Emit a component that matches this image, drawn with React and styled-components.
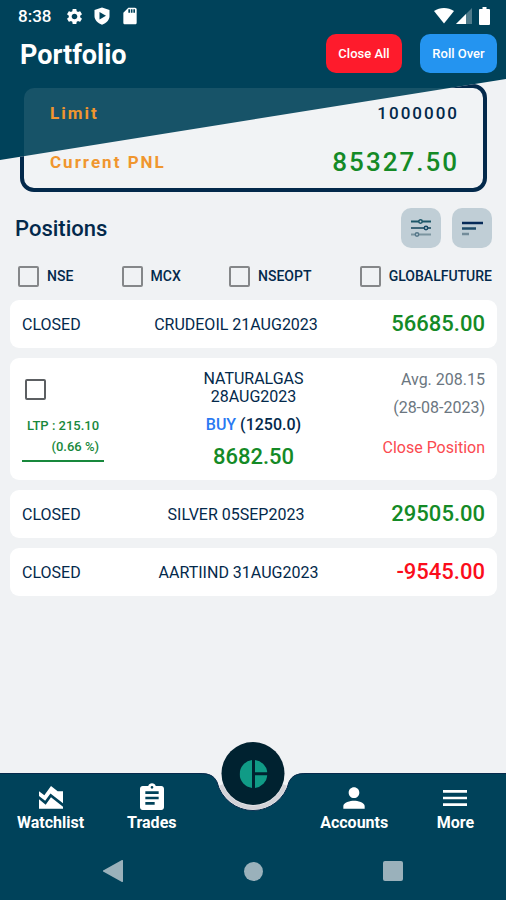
import React from 'react';
import styled, { createGlobalStyle } from 'styled-components';
import {
  MdAreaChart,
  MdSettings,
  MdSdCard,
  MdAssignment,
  MdPerson,
  MdMenu,
} from 'react-icons/md';

const color = {
  teal: '#00425a',
  navy: '#03294b',
  page: '#f0f2f4',
  green: '#148a26',
  ltp: '#18883c',
  red: '#fb0d1b',
  orange: '#f0962e',
};

const GlobalStyle = createGlobalStyle`
  * { box-sizing: border-box; }
  body {
    margin: 0;
    background: ${color.page};
    color: ${color.navy};
    font-family: Roboto, "Liberation Sans", sans-serif;
  }
  button, input { font: inherit; }
  button { border: 0; padding: 0; background: none; cursor: pointer; }
  svg { display: block; }
`;

const Page = styled.div`
  min-height: 100vh;
  display: flex;
  flex-direction: column;
`;

const Hero = styled.header`
  position: relative;
  isolation: isolate;
`;

const Slant = styled.div`
  position: absolute;
  z-index: -1;
  top: 0;
  left: 0;
  right: 0;
  height: 160px;
  background: ${color.teal};
  clip-path: polygon(0 0, 100% 0, 100% 79px, 0 160px);
`;

const StatusBar = styled.div`
  height: 32px;
  padding: 0 16px 0 18px;
  display: flex;
  align-items: center;
  justify-content: space-between;
  color: #fff;
`;

const StatusGroup = styled.div`
  display: flex;
  align-items: center;
  gap: ${(p) => p.$gap}px;
`;

const Clock = styled.time`
  margin-right: 4px;
  font-size: 17px;
  font-weight: 500;
`;

const TitleBar = styled.div`
  padding: 2px 9px 0 20px;
  height: 52px;
  display: flex;
  align-items: flex-start;
  gap: 18px;
`;

const Title = styled.h1`
  margin: 0 auto 0 0;
  color: #fff;
  font-size: 27px;
  line-height: 42px;
  font-weight: 700;
`;

const ActionButton = styled.button`
  height: 39px;
  width: ${(p) => p.$width}px;
  border-radius: 10px;
  background: ${(p) => p.$tone};
  color: #fff;
  font-size: 13px;
  font-weight: 500;
`;

const SummaryArea = styled.section`
  position: relative;
  padding: 0 19px 0 20px;
`;

const FrameLayer = styled.div`
  position: absolute;
  inset: 0;
  padding: inherit;
  pointer-events: none;
  clip-path: polygon(0 76px, 100% -5px, 100% 100%, 0 100%);
`;

const Frame = styled.div`
  height: 100%;
  border: 4px solid ${color.navy};
  border-radius: 14px;
`;

const Summary = styled.dl`
  margin: 0;
  height: 108px;
  padding: 0 24px 0 26px;
  border: 4px solid transparent;
  border-radius: 14px;
  background: rgba(255, 255, 255, 0.09) padding-box;
  letter-spacing: 2px;
`;

const SummaryRow = styled.div`
  height: 49px;
  display: flex;
  align-items: center;
  justify-content: space-between;
`;

const SummaryLabel = styled.dt`
  color: ${color.orange};
  font-size: 17px;
  font-weight: 700;
`;

const SummaryValue = styled.dd`
  margin: 0;
  color: ${(p) => (p.$strong ? color.green : color.navy)};
  font-size: ${(p) => (p.$strong ? 26 : 17)}px;
  font-weight: 500;
`;

const Main = styled.main`
  flex: 1;
  padding: 16px 9px 60px 10px;
`;

const SectionHead = styled.div`
  padding: 0 5px;
  display: flex;
  align-items: center;
  gap: 11px;
`;

const SectionTitle = styled.h2`
  margin: 0 auto 0 0;
  padding-top: 2px;
  font-size: 22px;
  line-height: 38px;
  font-weight: 500;
`;

const IconButton = styled.button`
  width: 40px;
  height: 40px;
  display: grid;
  place-items: center;
  border-radius: 10px;
  background: #c0ced6;
`;

const Filters = styled.div`
  height: 52px;
  padding: 4px 5px 0 8px;
  display: flex;
  align-items: center;
  justify-content: space-between;
`;

const FilterLabel = styled.label`
  display: flex;
  align-items: center;
  gap: 8px;
  font-size: 14px;
  font-weight: 500;
`;

const Checkbox = styled.input.attrs({ type: 'checkbox' })`
  appearance: none;
  margin: 0;
  width: 21px;
  height: 21px;
  border: 2px solid ${(p) => p.$edge};
  border-radius: 2px;
  &:checked { background: ${color.teal}; }
`;

const PositionList = styled.ul`
  margin: 0;
  padding: 0;
  list-style: none;
  display: grid;
  gap: 10px;
`;

const Card = styled.li`
  border-radius: 9px;
  background: #fff;
  padding: 0 12px;
  font-size: 16px;
`;

const ClosedCard = styled(Card)`
  height: 48px;
  display: flex;
  align-items: center;
  justify-content: space-between;
`;

const OpenCard = styled(Card)`
  min-height: 122px;
  padding: 12px 12px 8px;
  display: grid;
  grid-template-columns: 1fr 1fr 1fr;
`;

const Amount = styled.span`
  color: ${(p) => (p.$loss ? color.red : color.green)};
  font-size: 22px;
  line-height: 28px;
  font-weight: 500;
`;

const PriceColumn = styled.div`
  padding-top: 9px;
  display: flex;
  flex-direction: column;
  align-items: flex-start;

  ${Checkbox} { margin-left: 3px; }
`;

const LastPrice = styled.div`
  margin-top: 15px;
  padding: 0 5px 3px;
  border-bottom: 2px solid ${color.ltp};
  color: ${color.ltp};
  font-size: 13px;
  line-height: 21px;
  font-weight: 500;
  text-align: right;
`;

const NameColumn = styled.div`
  display: flex;
  flex-direction: column;
  align-items: center;
  text-align: center;
  line-height: 18px;
`;

const Side = styled.div`
  margin: 9px 0 8px;
  font-weight: 500;
  line-height: 20px;
`;

const Buy = styled.span`
  color: #2979f2;
`;

const DetailColumn = styled.div`
  display: flex;
  flex-direction: column;
  align-items: flex-end;
  color: #6b7680;
  line-height: 20px;
  gap: 8px;
`;

const CloseLink = styled.button`
  margin-top: 12px;
  color: #fb4a50;
  white-space: nowrap;
`;

const Bottom = styled.footer`
  position: sticky;
  bottom: 0;
  background: ${color.teal};
`;

const Nav = styled.nav`
  display: grid;
  grid-template-columns: repeat(5, 1fr);
  height: 69px;
  border-top: 1px solid #062a4c;
`;

const NavItem = styled.a`
  padding-top: 8px;
  display: flex;
  flex-direction: column;
  align-items: center;
  color: #fff;
  font-size: 16px;
  line-height: 18px;
  font-weight: 700;
  text-decoration: none;
`;

const Notch = styled.svg`
  position: absolute;
  top: 0;
  left: 50%;
  transform: translateX(-50%);
`;

const HomeButton = styled.button`
  position: absolute;
  top: -31px;
  left: 50%;
  transform: translateX(-50%);
  width: 63px;
  height: 63px;
  display: grid;
  place-items: center;
  border-radius: 50%;
  background: #002230;
`;

const SystemBar = styled.div`
  height: 58px;
  padding: 0 103px;
  display: flex;
  align-items: center;
  justify-content: space-between;
  color: #9ab1bb;
`;

const ShieldIcon = () => (
  <svg width="16" height="18" viewBox="0 0 16 18" aria-hidden="true">
    <path fill="#fff" d="M8 .5 15.500 3v6c0 4-3 7-7.500 8.700C3.500 16 .5 13 .5 9V3z" />
    <path fill={color.teal} d="M5.500 5v7.600L12 8.800z" />
  </svg>
);

const WifiIcon = () => (
  <svg width="20" height="16" viewBox="0 0 20 16" aria-hidden="true">
    <path fill="#fff" d="M0 3C6-1 14-1 20 3L10 15.500z" />
  </svg>
);

const SignalIcon = () => (
  <svg width="16" height="16" viewBox="0 0 16 16" aria-hidden="true">
    <path fill="#4f7b8b" d="M16 0v16H0z" />
    <path fill="#fff" d="M10 6v10H0z" />
  </svg>
);

const BatteryIcon = () => (
  <svg width="16" height="18" viewBox="-5 0 16 18" aria-hidden="true">
    <path fill="#fff" d="M3.500 0h4v2H10a1 1 0 0 1 1 1v14a1 1 0 0 1-1 1H1a1 1 0 0 1-1-1V3a1 1 0 0 1 1-1h2.500z" />
  </svg>
);

const TuneIcon = () => (
  <svg width="20" height="18" viewBox="0 0 20 18" fill="#c0ced6" strokeWidth="2" aria-hidden="true">
    <path d="M0 2.500h20" stroke="#1b5668" />
    <path d="M0 9h20" stroke="#3c6577" />
    <path d="M0 15.500h20" stroke="#7b949f" />
    <circle cx="9.500" cy="2.500" r="1.700" strokeWidth="1.500" stroke="#1b5668" />
    <circle cx="15" cy="9" r="1.700" strokeWidth="1.500" stroke="#164a66" />
    <circle cx="6" cy="15.500" r="1.700" strokeWidth="1.500" stroke="#56788a" />
  </svg>
);

const SortIcon = () => (
  <svg width="21" height="16" viewBox="0 0 21 16" fill="none" strokeWidth="2.500" aria-hidden="true">
    <path d="M0 3h21" stroke="#062a58" />
    <path d="M0 8.500h14" stroke="#1d4a68" />
    <path d="M0 14h7" stroke="#738c9a" />
  </svg>
);

const PieIcon = () => (
  <svg width="28" height="28" viewBox="0 0 28 28" fill="#109b86" aria-hidden="true">
    <path d="M12.500.1v27.800A14 14 0 0 1 12.500.1z" />
    <path d="M15.500.1A14 14 0 0 1 27.900 12.300H15.500z" />
    <path d="M15.500 15.300h12.400A14 14 0 0 1 15.500 27.900z" />
  </svg>
);

const exchanges = ['NSE', 'MCX', 'NSEOPT', 'GLOBALFUTURE'];

const ClosedPosition = ({ name, amount }) => (
  <ClosedCard>
    <span>CLOSED</span>
    <span>{name}</span>
    <Amount $loss={amount.startsWith('-')}>{amount}</Amount>
  </ClosedCard>
);

export default function App() {
  return (
    <Page>
      <GlobalStyle />
      <Hero>
        <Slant />
        <StatusBar>
          <StatusGroup $gap={10}>
            <Clock>8:38</Clock>
            <MdSettings size={19} />
            <ShieldIcon />
            <MdSdCard size={20} />
          </StatusGroup>
          <StatusGroup $gap={2}>
            <WifiIcon />
            <SignalIcon />
            <BatteryIcon />
          </StatusGroup>
        </StatusBar>
        <TitleBar>
          <Title>Portfolio</Title>
          <ActionButton $width={76} $tone="#fe1b2c">Close All</ActionButton>
          <ActionButton $width={77} $tone="#2494f0">Roll Over</ActionButton>
        </TitleBar>
        <SummaryArea>
          <FrameLayer>
            <Frame />
          </FrameLayer>
          <Summary>
            <SummaryRow>
              <SummaryLabel>Limit</SummaryLabel>
              <SummaryValue>1000000</SummaryValue>
            </SummaryRow>
            <SummaryRow>
              <SummaryLabel>Current PNL</SummaryLabel>
              <SummaryValue $strong>85327.50</SummaryValue>
            </SummaryRow>
          </Summary>
        </SummaryArea>
      </Hero>

      <Main>
        <SectionHead>
          <SectionTitle>Positions</SectionTitle>
          <IconButton aria-label="Filter positions"><TuneIcon /></IconButton>
          <IconButton aria-label="Sort positions"><SortIcon /></IconButton>
        </SectionHead>
        <Filters>
          {exchanges.map((name) => (
            <FilterLabel key={name}>
              <Checkbox $edge="#858789" />
              {name}
            </FilterLabel>
          ))}
        </Filters>
        <PositionList>
          <ClosedPosition name="CRUDEOIL 21AUG2023" amount="56685.00" />
          <OpenCard>
            <PriceColumn>
              <Checkbox $edge="#5c5f62" aria-label="Select NATURALGAS 28AUG2023" />
              <LastPrice>
                LTP : 215.10
                <br />
                (0.66 %)
              </LastPrice>
            </PriceColumn>
            <NameColumn>
              <span>NATURALGAS<br />28AUG2023</span>
              <Side><Buy>BUY</Buy> (1250.0)</Side>
              <Amount>8682.50</Amount>
            </NameColumn>
            <DetailColumn>
              <span>Avg. 208.15</span>
              <span>(28-08-2023)</span>
              <CloseLink>Close Position</CloseLink>
            </DetailColumn>
          </OpenCard>
          <ClosedPosition name="SILVER 05SEP2023" amount="29505.00" />
          <ClosedPosition name="AARTIIND 31AUG2023" amount="-9545.00" />
        </PositionList>
      </Main>

      <Bottom>
        <Nav>
          <NavItem href="#watchlist"><MdAreaChart size={32} />Watchlist</NavItem>
          <NavItem href="#trades"><MdAssignment size={32} />Trades</NavItem>
          <span />
          <NavItem href="#accounts"><MdPerson size={32} />Accounts</NavItem>
          <NavItem href="#more"><MdMenu size={32} />More</NavItem>
        </Nav>
        <Notch width="108" height="40" viewBox="0 0 108 40" aria-hidden="true">
          <path fill={color.page} d="M0 0C11 0 15 3 18 9A37 37 0 0 0 90 9C93 3 97 0 108 0z" />
          <path fill="none" stroke="#062a4c" d="M0 .5C11 .5 15 3 18 9A37 37 0 0 0 90 9C93 3 97 .5 108 .5" />
          <path fill="none" stroke="#d3d3d8" strokeWidth="4" d="M22 12A34 34 0 0 0 86 12" />
        </Notch>
        <HomeButton aria-label="Portfolio"><PieIcon /></HomeButton>
        <SystemBar>
          <svg width="20" height="22" viewBox="0 0 20 22" fill="currentColor" aria-hidden="true">
            <path d="M20 1v20a1 1 0 0 1-1.500.8L1 12a1 1 0 0 1 0-2L18.500.2A1 1 0 0 1 20 1z" />
          </svg>
          <svg width="19" height="19" viewBox="0 0 19 19" fill="currentColor" aria-hidden="true">
            <circle cx="9.500" cy="9.500" r="9.500" />
          </svg>
          <svg width="20" height="20" viewBox="0 0 20 20" fill="currentColor" aria-hidden="true">
            <rect width="20" height="20" rx="2" />
          </svg>
        </SystemBar>
      </Bottom>
    </Page>
  );
}
